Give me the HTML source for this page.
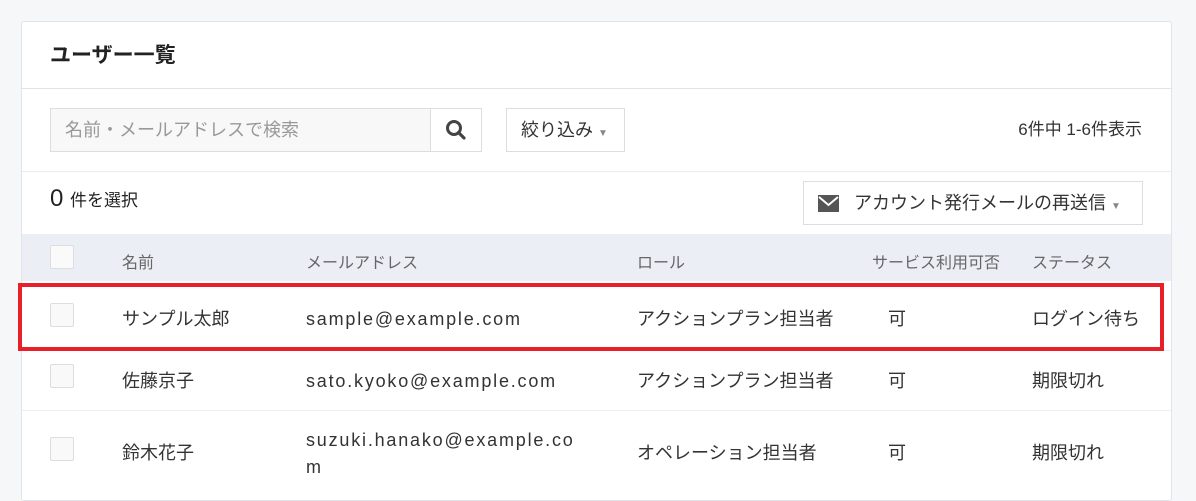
<!DOCTYPE html>
<html><head><meta charset="utf-8"><style>
*{box-sizing:border-box;margin:0;padding:0}
body{width:1196px;height:492px;overflow:hidden;background:#f6f7f9;font-family:"Liberation Sans","Noto Sans CJK JP",sans-serif;color:#333;position:relative}
.a{position:absolute;white-space:nowrap;line-height:24px}
.card{position:absolute;left:21px;top:21px;width:1151px;height:480px;background:#fff;border:1px solid #e1e4e8;border-radius:3px}
.cb{position:absolute;width:24px;height:24px;border:1px solid #ddd;border-radius:2px;background:#f9f9f9}
.t{font-size:18px;color:#333}
.h{font-size:16px;color:#666}
.em{letter-spacing:1.8px}
</style></head><body>
<div class="card"></div>
<div class="a" style="left:50px;top:44px;font-size:21px;font-weight:bold;color:#222">ユーザー一覧</div>
<div class="a" style="left:22px;top:88px;width:1149px;height:1px;background:#e3e3e3"></div>
<div class="a" style="left:50px;top:108px;width:381px;height:44px;border:1px solid #ddd;background:#f8f8f8"></div>
<div class="a" style="left:65px;top:118px;font-size:18px;color:#999">名前・メールアドレスで検索</div>
<div class="a" style="left:430px;top:108px;width:52px;height:44px;border:1px solid #ddd;background:#fff"></div>
<svg class="a" style="left:444px;top:118px" width="24" height="24" viewBox="0 0 24 24"><circle cx="10" cy="10" r="6.5" fill="none" stroke="#444" stroke-width="3"/><path d="M14.5 14.5L20 20" stroke="#444" stroke-width="3.2" stroke-linecap="round"/></svg>
<div class="a" style="left:506px;top:108px;width:119px;height:44px;border:1px solid #ddd"></div>
<div class="a" style="left:521px;top:118px;font-size:18px;color:#333">絞り込み <span style="font-size:10px;color:#888">▼</span></div>
<div class="a" style="right:54px;top:118px;font-size:17px;color:#333">6件中 1-6件表示</div>
<div class="a" style="left:22px;top:171px;width:1149px;height:1px;background:#ececec"></div>
<div class="a" style="left:50px;top:187px;font-size:24px;color:#222">0 <span style="font-size:17px">件を選択</span></div>
<div class="a" style="left:803px;top:181px;width:340px;height:44px;border:1px solid #ddd"></div>
<svg class="a" style="left:818px;top:195px" width="21" height="17" viewBox="0 0 21 17"><rect width="21" height="17" fill="#555"/><path d="M1 2L10.5 10L20 2" fill="none" stroke="#fff" stroke-width="2"/></svg>
<div class="a" style="left:854px;top:191px;font-size:18px;color:#333">アカウント発行メールの再送信 <span style="font-size:10px;color:#888">▼</span></div>
<div class="a" style="left:22px;top:234px;width:1149px;height:47px;background:#ebeff5"></div>
<div class="cb" style="left:50px;top:245px;background:#fafafa"></div>
<div class="a h" style="left:122px;top:252px">名前</div>
<div class="a h" style="left:306px;top:252px">メールアドレス</div>
<div class="a h" style="left:637px;top:252px">ロール</div>
<div class="a h" style="left:872px;top:252px">サービス利用可否</div>
<div class="a h" style="left:1032px;top:252px">ステータス</div>
<div class="cb" style="left:50px;top:303px"></div>
<div class="a t" style="left:122px;top:307px">サンプル太郎</div>
<div class="a t em" style="left:306px;top:307px">sample@example.com</div>
<div class="a t" style="left:637px;top:307px">アクションプラン担当者</div>
<div class="a t" style="left:888px;top:307px">可</div>
<div class="a t" style="left:1032px;top:307px">ログイン待ち</div>
<div class="a" style="left:22px;top:350px;width:1149px;height:1px;background:#eee"></div>
<div class="cb" style="left:50px;top:364px"></div>
<div class="a t" style="left:122px;top:369px">佐藤京子</div>
<div class="a t em" style="left:306px;top:369px">sato.kyoko@example.com</div>
<div class="a t" style="left:637px;top:369px">アクションプラン担当者</div>
<div class="a t" style="left:888px;top:369px">可</div>
<div class="a t" style="left:1032px;top:369px">期限切れ</div>
<div class="a" style="left:22px;top:410px;width:1149px;height:1px;background:#eee"></div>
<div class="cb" style="left:50px;top:437px"></div>
<div class="a t" style="left:122px;top:441px">鈴木花子</div>
<div class="a t em" style="left:306px;top:427px;line-height:27px">suzuki.hanako@example.co<br>m</div>
<div class="a t" style="left:637px;top:441px">オペレーション担当者</div>
<div class="a t" style="left:888px;top:441px">可</div>
<div class="a t" style="left:1032px;top:441px">期限切れ</div>
<div class="a" style="left:18px;top:283px;width:1146px;height:68px;border:4px solid #e8202a"></div>
</body></html>
